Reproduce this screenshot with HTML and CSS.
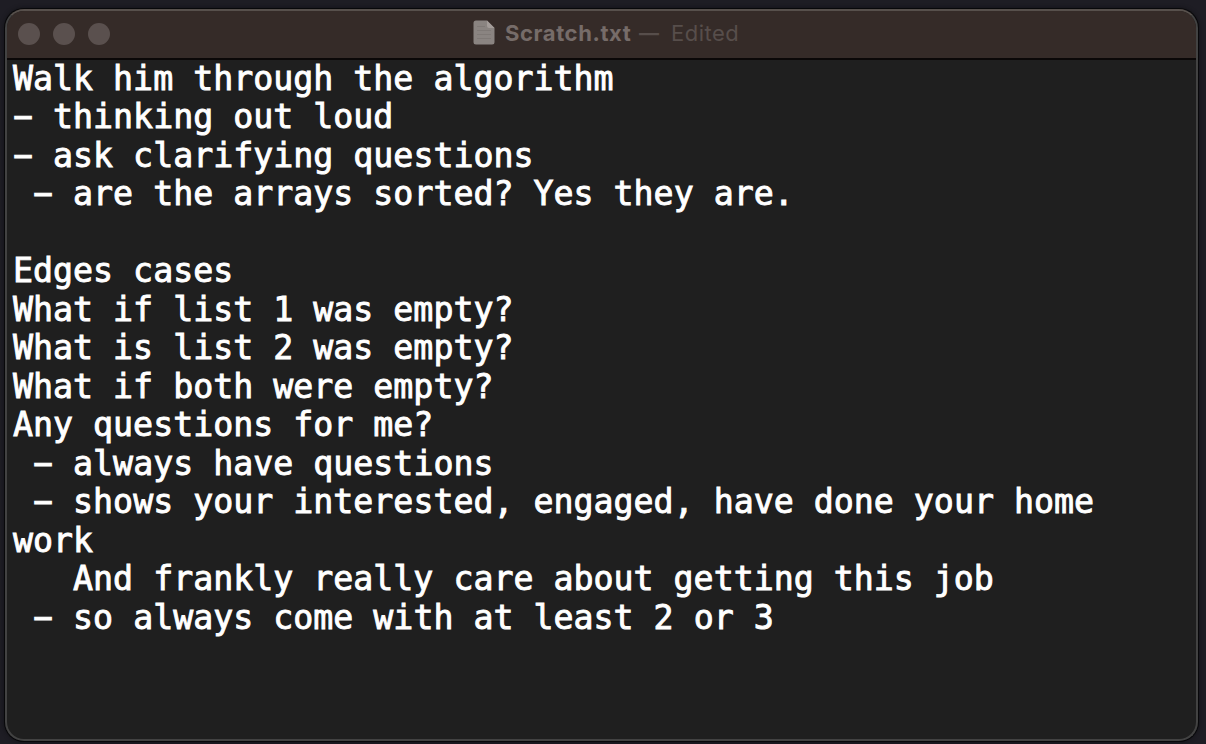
FILE: index.html
```html
<!DOCTYPE html>
<html lang="en">
<head>
<meta charset="utf-8">
<title>Scratch.txt</title>
<link rel="stylesheet" href="styles.css">
</head>
<body>
<main class="window">
  <header class="titlebar">
    <div class="controls"><i class="dot"></i><i class="dot"></i><i class="dot"></i></div>
    <div class="title">
      <svg class="doc" width="22" height="25" viewBox="0 0 22 25">
        <path d="M3 .5h11L21.500 8v14a2.500 2.500 0 0 1-2.500 2.500H3A2.500 2.500 0 0 1 .5 22V3A2.500 2.500 0 0 1 3 .5z" fill="#8a8481"/>
        <path d="M14 .5 21.500 8H16a2 2 0 0 1-2-2z" fill="#a39c99"/>
        <path d="M4 6.500h8M4 10.500h14M4 14.500h14M4 18.500h14" stroke="#7f7976" stroke-width="1"/>
      </svg>
      <span class="name">Scratch.txt</span>
      <span class="dash">—</span>
      <span class="state">Edited</span>
    </div>
  </header>
  <pre class="editor">Walk him through the algorithm
<span class="bullet">-</span> thinking out loud
<span class="bullet">-</span> ask clarifying questions
 <span class="bullet">-</span> are the arrays sorted? Yes they are.

Edges cases
What if list 1 was empty?
What is list 2 was empty?
What if both were empty?
Any questions for me?
 <span class="bullet">-</span> always have questions
 <span class="bullet">-</span> shows your interested, engaged, have done your home
work
   And frankly really care about getting this job
 <span class="bullet">-</span> so always come with at least 2 or 3</pre>
</main>
</body>
</html>
```
FILE: styles.css
```css
* { box-sizing: border-box; }
body {
  margin: 0;
  height: 744px;
  padding: 9px 8px 3px 5px;
  background: #1e1d24;
  overflow: hidden;
}
.window {
  height: 732px;
  border: 2px solid #424242;
  border-top-color: #57504c;
  border-radius: 19px;
  background: #1f1f1f;
  box-shadow: 0 0 0 1px #08080a, 0 0 5px #0c0c0f;
  overflow: hidden;
}
.titlebar {
  display: flex;
  align-items: center;
  height: 49px;
  padding: 0 0 2px 11px;
  background: #352b28;
  border-bottom: 2px solid #0b0808;
}
.controls { display: flex; gap: 13px; width: 455px; }
.dot { width: 22px; height: 22px; border-radius: 50%; background: #5a504e; }
.title {
  display: flex;
  align-items: center;
  padding-bottom: 2px;
  font: 22px/26px Inter, "Liberation Sans", sans-serif;
  color: #574e4b;
  white-space: nowrap;
}
.doc { margin-right: 10px; }
.name { width: 134px; font-weight: 700; letter-spacing: 0.6px; color: #766c69; }
.dash { width: 32px; font-size: 20px; font-weight: 700; }
.state { letter-spacing: 0.5px; }
.editor {
  margin: -0.5px 0 0;
  padding: 0 0 0 6px;
  color: #fff;
  font: 33.25px/38.5px "DejaVu Sans Mono", monospace;
  -webkit-text-stroke: 0.9px #fff;
}
.bullet {
  display: inline-block;
  line-height: 1;
  transform: translate(0, -1.5px) scaleX(1.9);
}
```
